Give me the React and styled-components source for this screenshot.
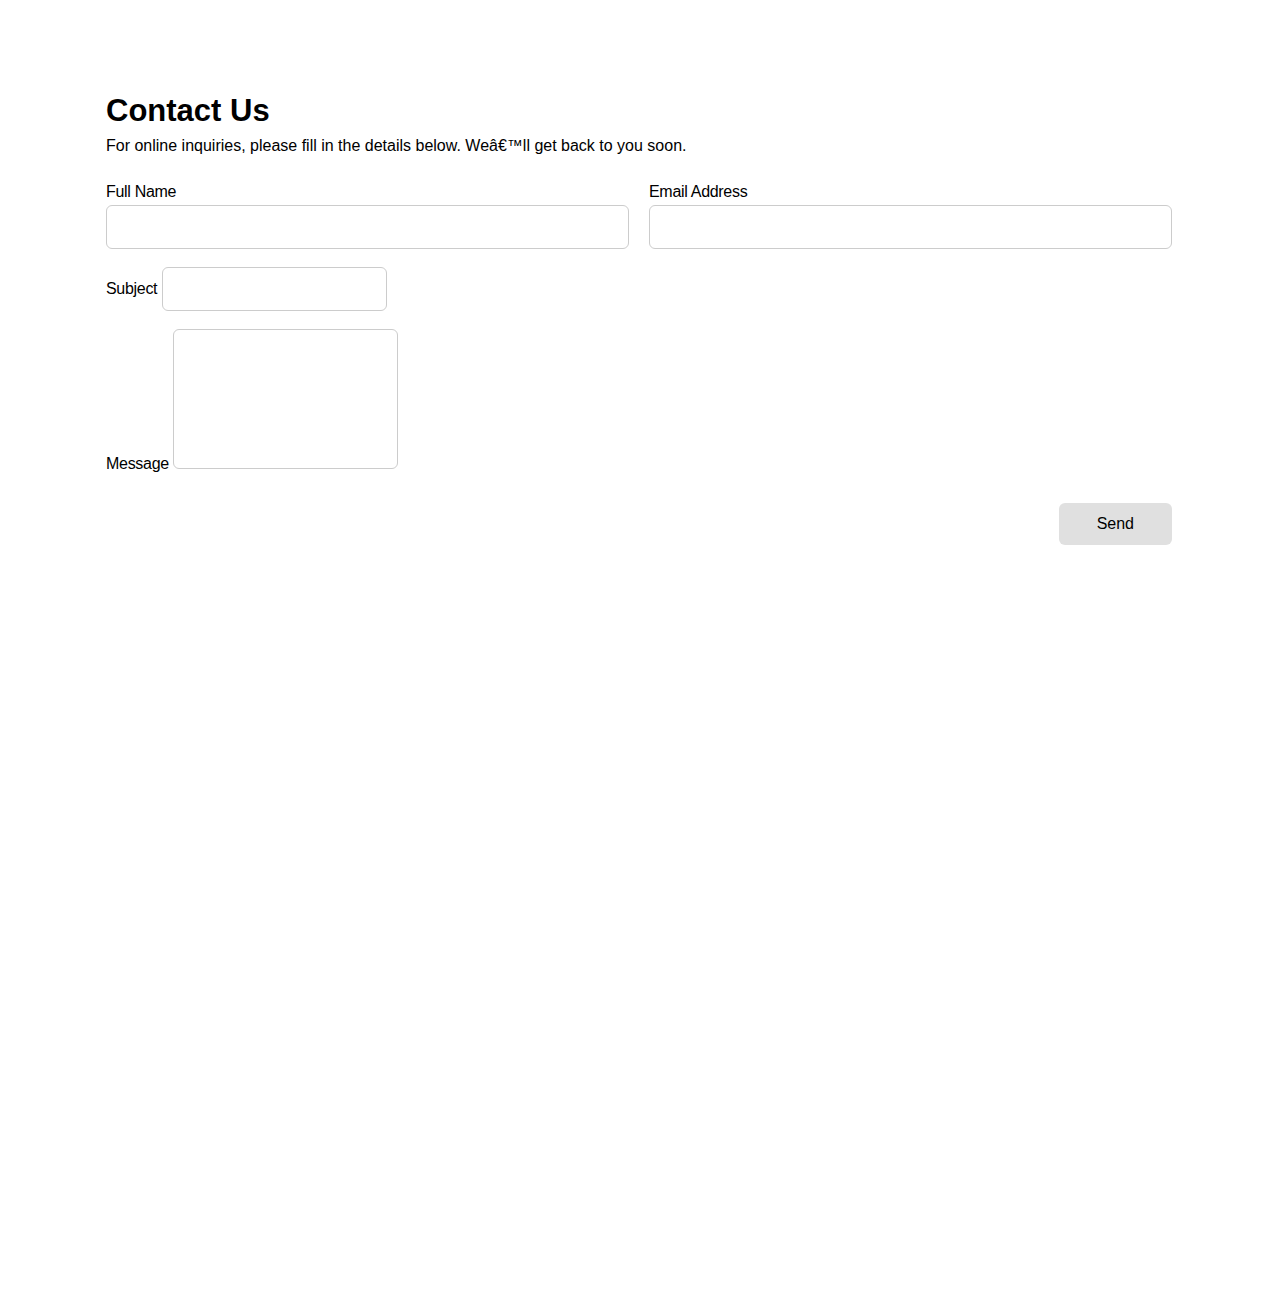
import styled, { createGlobalStyle } from 'styled-components';

const GlobalStyle = createGlobalStyle`
  body {
    margin: 0;
    background: #fff;
    color: #000;
    font-family: "Liberation Sans", Arial, sans-serif;
  }
  * {
    box-sizing: border-box;
  }
`;

const Page = styled.main`
  max-width: 1066px;
  margin: 0 auto;
  padding-top: 93px;
`;

const Title = styled.h1`
  margin: 0;
  font-size: 31px;
  line-height: 36px;
  font-weight: 700;
`;

const Intro = styled.p`
  margin: 7px 0 0;
  font-size: 16px;
  line-height: 20px;
`;

const Form = styled.form`
  margin-top: 26px;
  display: flex;
  flex-direction: column;
`;

const Columns = styled.div`
  display: grid;
  grid-template-columns: 1fr 1fr;
  gap: 20px;
`;

const Field = styled.div`
  display: flex;
  flex-direction: column;
  gap: 3px;
`;

const Label = styled.label`
  font-size: 16px;
  line-height: 20px;
  letter-spacing: -0.3px;
`;

const Input = styled.input`
  height: 44px;
  width: ${(p) => (p.$w ? `${p.$w}px` : '100%')};
  border: 1px solid #ccc;
  border-radius: 6px;
  padding: 0 10px;
  font: inherit;
  font-size: 16px;
`;

const InlineRow = styled.div`
  margin-top: 18px;
  font-size: 16px;
  line-height: 20px;
`;

const TextArea = styled.textarea`
  width: 225px;
  height: 140px;
  border: 1px solid #ccc;
  border-radius: 6px;
  padding: 10px;
  font: inherit;
  resize: none;
  vertical-align: baseline;
`;

const Actions = styled.div`
  margin-top: 29px;
  display: flex;
  justify-content: flex-end;
`;

const Button = styled.button`
  height: 42px;
  padding: 0 38px;
  border: none;
  border-radius: 6px;
  background: #e0e0e0;
  color: #000;
  font-family: "Liberation Sans", Arial, sans-serif;
  font-size: 16px;
  cursor: pointer;
`;

export default function App() {
  return (
    <>
      <GlobalStyle />
      <Page>
        <Title>Contact Us</Title>
        <Intro>
          For online inquiries, please fill in the details below. Weâ€™ll get back to you soon.
        </Intro>
        <Form onSubmit={(e) => e.preventDefault()}>
          <Columns>
            <Field>
              <Label htmlFor="name">Full Name</Label>
              <Input id="name" type="text" />
            </Field>
            <Field>
              <Label htmlFor="email">Email Address</Label>
              <Input id="email" type="email" />
            </Field>
          </Columns>
          <InlineRow>
            <Label htmlFor="subject">Subject</Label>{' '}
            <Input id="subject" type="text" $w={225} />
          </InlineRow>
          <InlineRow>
            <Label htmlFor="message">Message</Label>{' '}
            <TextArea id="message" />
          </InlineRow>
          <Actions>
            <Button type="submit">Send</Button>
          </Actions>
        </Form>
      </Page>
    </>
  );
}
